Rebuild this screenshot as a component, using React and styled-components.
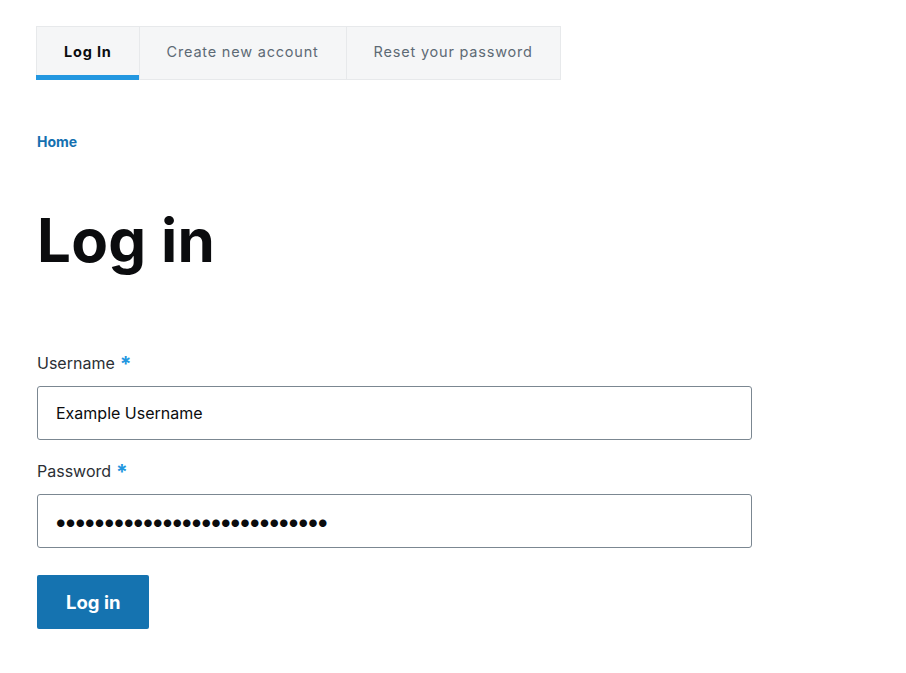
import React from 'react';
import styled, { createGlobalStyle } from 'styled-components';

const GlobalStyle = createGlobalStyle`
  html, body {
    margin: 0;
    background: #fff;
  }
  body {
    font-family: 'Inter', 'Liberation Sans', sans-serif;
    color: #232429;
  }
`;

const Page = styled.div`
  padding: 26px 36px 40px;
`;

const TabList = styled.nav`
  display: inline-flex;
  background: #f5f6f7;
  border: 1px solid #e7e9eb;
`;

const Tab = styled.a`
  position: relative;
  display: flex;
  align-items: center;
  box-sizing: border-box;
  height: 52px;
  padding: 0 27px 4px;
  font-size: 14.5px;
  letter-spacing: 0.055em;
  text-decoration: none;
  color: ${(p) => (p.$active ? '#0b0c0e' : '#5d6a75')};
  font-weight: ${(p) => (p.$active ? 700 : 400)};
  border-left: ${(p) => (p.$first ? 'none' : '1px solid #e7e9eb')};

  &::after {
    content: '';
    display: ${(p) => (p.$active ? 'block' : 'none')};
    position: absolute;
    left: -1px;
    right: 0;
    bottom: -1px;
    height: 5px;
    background: #2397e0;
  }
`;

const Breadcrumb = styled.a`
  display: block;
  margin-top: 52px;
  margin-left: 1px;
  font-size: 14px;
  line-height: 20px;
  font-weight: 700;
  color: #1470b0;
  text-decoration: none;
`;

const Title = styled.h1`
  margin: 53px 0 0 1px;
  font-size: 60px;
  line-height: 70px;
  font-weight: 700;
  letter-spacing: 0.005em;
  color: #0b0c0e;
`;

const Form = styled.form`
  margin-top: 76px;
  width: 715px;
  padding-left: 1px;
`;

const Field = styled.div`
  margin-bottom: 19px;
`;

const Label = styled.label`
  display: flex;
  align-items: center;
  height: 24px;
  font-size: 16px;
  color: #2b2f35;
  margin-bottom: 11px;
`;

const Required = styled.span`
  color: #2397e0;
  font-size: 21px;
  font-weight: 700;
  line-height: 1;
  margin-left: 5px;
  margin-top: 2px;
`;

const Input = styled.input`
  box-sizing: border-box;
  display: block;
  width: 100%;
  height: 54px;
  padding: 0 18px;
  border: 1px solid #7b8791;
  border-radius: 3px;
  font-family: inherit;
  font-size: 16px;
  color: #0b0c0e;
  background: #fff;
  outline: none;
`;

const SecretInput = styled(Input)`
  padding: 0 16px;
  font-size: 24px;
  letter-spacing: -3.8px;
`;

const Submit = styled.button`
  margin-top: 8px;
  height: 54px;
  padding: 0 29px;
  border: none;
  border-radius: 2px;
  background: #1573b0;
  color: #fff;
  font-family: inherit;
  font-size: 18.5px;
  font-weight: 700;
  cursor: pointer;
`;

export default function App() {
  return (
    <>
      <GlobalStyle />
      <Page>
        <TabList>
          <Tab href="#" $active $first>Log In</Tab>
          <Tab href="#">Create new account</Tab>
          <Tab href="#">Reset your password</Tab>
        </TabList>

        <Breadcrumb href="#">Home</Breadcrumb>

        <Title>Log in</Title>

        <Form onSubmit={(e) => e.preventDefault()}>
          <Field>
            <Label htmlFor="name">
              Username<Required>*</Required>
            </Label>
            <Input id="name" type="text" defaultValue="Example Username" />
          </Field>
          <Field>
            <Label htmlFor="pass">
              Password<Required>*</Required>
            </Label>
            <SecretInput id="pass" type="password" defaultValue="examplepassword1234567890abc" />
          </Field>
          <Submit type="submit">Log in</Submit>
        </Form>
      </Page>
    </>
  );
}
